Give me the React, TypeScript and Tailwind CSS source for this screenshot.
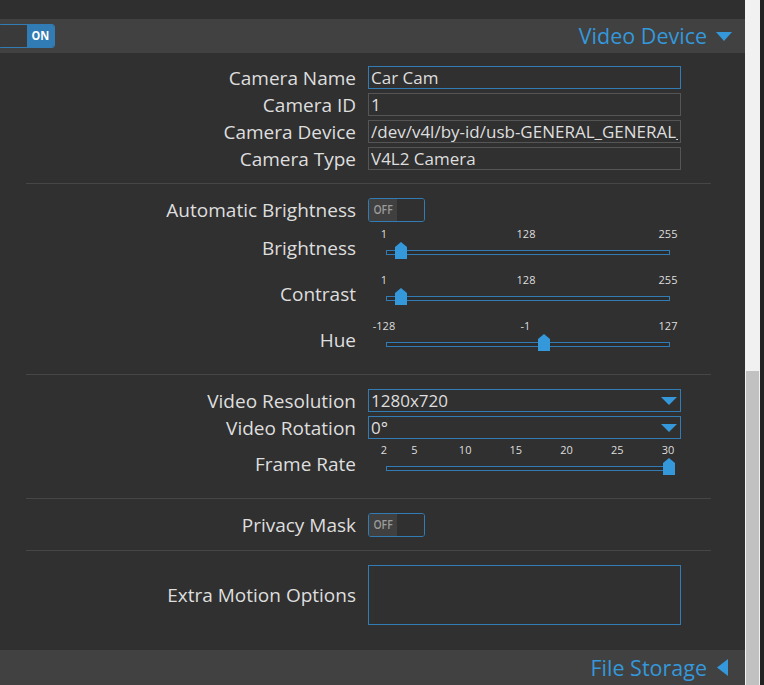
import React from "react";

const BLUE = "#3498db";

function Label({ children }: { children: React.ReactNode }) {
  return (
    <div className="w-[356px] shrink-0 text-right text-[19px] leading-[20px] text-[#dedede] whitespace-nowrap">
      {children}
    </div>
  );
}

function Row({ label, children }: { label: string; children: React.ReactNode }) {
  return (
    <div className="flex shrink-0 items-center">
      <Label>{label}</Label>
      <div className="ml-[12px] w-[313px]">{children}</div>
    </div>
  );
}

function TextInput({ value, focused }: { value: string; focused?: boolean }) {
  return (
    <input
      readOnly
      value={value}
      className={
        "block h-[23px] w-[313px] bg-[#303030] px-[2px] text-[17px] leading-[21px] text-[#dedede] outline-none " +
        (focused ? "border border-[#317cb5]" : "border border-[#555555]")
      }
    />
  );
}

function Select({ value }: { value: string }) {
  return (
    <div className="flex h-[23px] w-[313px] items-center justify-between border border-[#317cb5] bg-[#303030] pl-[2px] pr-[3px]">
      <span className="text-[17px] leading-[21px] text-[#dedede]">{value}</span>
      <svg width="16" height="8" viewBox="0 0 16 8">
        <polygon points="0,0 16,0 8,8" fill={BLUE} />
      </svg>
    </div>
  );
}

function Toggle({ on }: { on?: boolean }) {
  if (on) {
    return (
      <div className="flex h-[24px] w-[57px] overflow-hidden rounded-[3px] border border-[#317cb5]">
        <div className="w-[28px] bg-[#3a3a3a]" />
        <div className="flex flex-1 items-center justify-center bg-[#317cb5] text-white">
          <span className="inline-block scale-x-[0.85] text-[13px] font-bold">ON</span>
        </div>
      </div>
    );
  }
  return (
    <div className="flex h-[24px] w-[57px] overflow-hidden rounded-[3px] border border-[#317cb5]">
      <div className="flex w-[28px] items-center justify-center bg-[#404040] text-[#9c9c9c]">
        <span className="inline-block scale-x-[0.8] text-[13px] font-semibold">OFF</span>
      </div>
      <div className="flex-1 bg-[#303030]" />
    </div>
  );
}

function Slider({
  min,
  max,
  ticks,
  value,
}: {
  min: number;
  max: number;
  ticks: number[];
  value: number;
}) {
  const trackLeft = 18;
  const trackWidth = 284;
  const pos = (v: number) => trackLeft + ((v - min) / (max - min)) * trackWidth;
  const center = Math.min(pos(value), trackLeft + trackWidth - 1.5);
  return (
    <div className="relative h-[46px] w-[313px]">
      {ticks.map((t) => (
        <span
          key={t}
          className="absolute top-[2px] -translate-x-1/2 text-[11px] leading-[11px] text-[#dedede]"
          style={{ left: pos(t) - 2 }}
        >
          {t}
        </span>
      ))}
      <div
        className="absolute top-[24px] h-[5px] border border-[#317cb5] bg-[#2c2c2c]"
        style={{ left: trackLeft, width: trackWidth }}
      />
      <svg
        className="absolute top-[16px]"
        style={{ left: center - 6 }}
        width="12"
        height="17"
        viewBox="0 0 12 17"
      >
        <polygon points="6,0 12,5 12,17 0,17 0,5" fill={BLUE} />
      </svg>
    </div>
  );
}

function SliderRow({ label, ...p }: { label: string; min: number; max: number; ticks: number[]; value: number }) {
  return (
    <div className="flex h-[46px] shrink-0 items-center">
      <div className="-mt-[3px]">
        <Label>{label}</Label>
      </div>
      <div className="ml-[12px]">
        <Slider {...p} />
      </div>
    </div>
  );
}

function Sep() {
  return <div className="ml-[26px] h-px w-[685px] shrink-0 bg-[#464646]" />;
}

export default function App() {
  return (
    <div className="flex h-[685px] w-[764px] overflow-hidden font-['Open_Sans','Noto_Sans',sans-serif]">
      <div className="flex w-[745px] shrink-0 flex-col bg-[#303030]">
        <div className="h-[19px] shrink-0 bg-[#2f2f2f]" />
        <div className="flex h-[34px] shrink-0 items-center justify-between bg-[#414141] pr-[13px]">
          <div className="-ml-[2px]">
            <Toggle on />
          </div>
          <div className="flex items-center gap-[9px]">
            <span className="text-[21.5px] leading-[28px] text-[#3498db]">Video Device</span>
            <svg width="16" height="9" viewBox="0 0 16 9">
              <polygon points="0,0 16,0 8,9" fill={BLUE} />
            </svg>
          </div>
        </div>

        <div className="flex shrink-0 flex-col gap-[4px] pb-[13px] pt-[13px]">
          <Row label="Camera Name">
            <TextInput value="Car Cam" focused />
          </Row>
          <Row label="Camera ID">
            <TextInput value="1" />
          </Row>
          <Row label="Camera Device">
            <TextInput value="/dev/v4l/by-id/usb-GENERAL_GENERAL_WEBCAM-video-index0" />
          </Row>
          <Row label="Camera Type">
            <TextInput value="V4L2 Camera" />
          </Row>
        </div>
        <Sep />

        <div className="flex shrink-0 flex-col pb-[10px] pt-[14px]">
          <Row label="Automatic Brightness">
            <Toggle />
          </Row>
          <div className="mt-[4px] flex flex-col">
            <SliderRow label="Brightness" min={1} max={255} ticks={[1, 128, 255]} value={14} />
            <SliderRow label="Contrast" min={1} max={255} ticks={[1, 128, 255]} value={14} />
            <SliderRow label="Hue" min={-128} max={127} ticks={[-128, -1, 127]} value={14} />
          </div>
        </div>
        <Sep />

        <div className="flex shrink-0 flex-col pb-[10px] pt-[14px]">
          <div className="flex flex-col gap-[4px]">
            <Row label="Video Resolution">
              <Select value="1280x720" />
            </Row>
            <Row label="Video Rotation">
              <Select value="0°" />
            </Row>
          </div>
          <div className="mt-[3px]">
            <SliderRow label="Frame Rate" min={2} max={30} ticks={[2, 5, 10, 15, 20, 25, 30]} value={30} />
          </div>
        </div>
        <Sep />

        <div className="shrink-0 pb-[13px] pt-[14px]">
          <Row label="Privacy Mask">
            <Toggle />
          </Row>
        </div>
        <Sep />

        <div className="shrink-0 pb-[25px] pt-[14px]">
          <Row label="Extra Motion Options">
            <textarea
              readOnly
              className="block h-[60px] w-[313px] resize-none border border-[#317cb5] bg-[#303030] outline-none"
            />
          </Row>
        </div>

        <div className="flex h-[35px] shrink-0 items-center justify-end gap-[10px] bg-[#414141] pr-[17px]">
          <span className="text-[21.5px] leading-[28px] text-[#3498db]">File Storage</span>
          <svg width="11" height="17" viewBox="0 0 11 17">
            <polygon points="11,0 11,17 0,8.5" fill={BLUE} />
          </svg>
        </div>
      </div>
      <div className="relative w-[15px] shrink-0 bg-[#f1f1f1]">
        <div className="absolute left-[1px] top-[371px] h-[314px] w-[13px] bg-[#c1c1c1]" />
      </div>
      <div className="w-[4px] shrink-0 bg-[#222222]" />
    </div>
  );
}
